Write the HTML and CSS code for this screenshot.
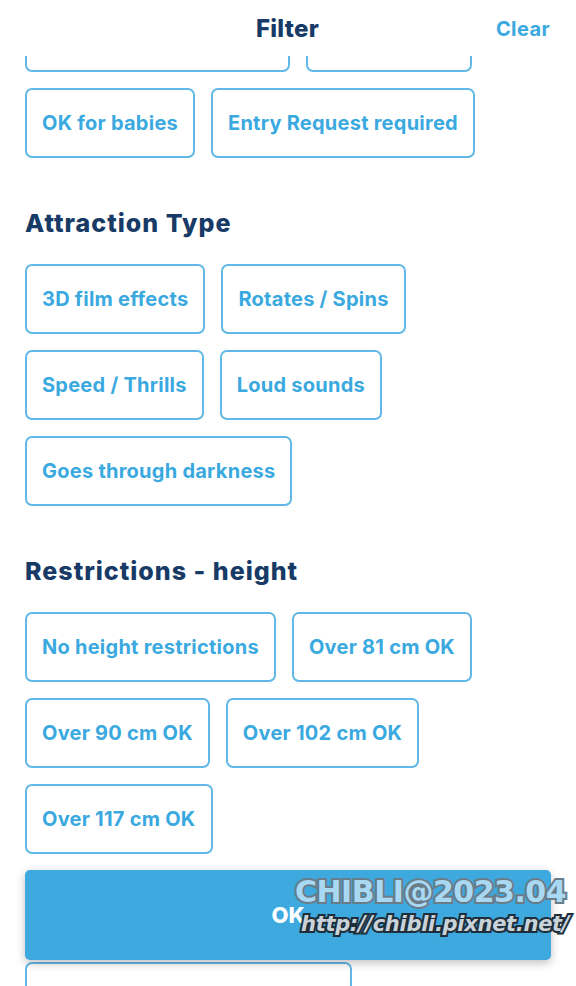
FILE: index.html
```html
<!DOCTYPE html>
<html lang="en">
<head>
  <meta charset="UTF-8">
  <meta name="viewport" content="width=device-width, initial-scale=1.0">
  <title>Filter</title>
  <link rel="stylesheet" href="styles.css">
</head>
<body>
  <div class="screen">
    <div class="header">
      <span></span>
      <h1 class="title">Filter</h1>
      <button class="clear">Clear</button>
    </div>

    <div class="scroll">
      <div class="content">
        <div class="chips first">
          <button class="chip wide-a"></button>
          <button class="chip wide-b"></button>
        </div>
        <div class="chips">
          <button class="chip">OK for babies</button>
          <button class="chip">Entry Request required</button>
        </div>

        <h2 class="section-title">Attraction Type</h2>
        <div class="chips">
          <button class="chip">3D film effects</button>
          <button class="chip">Rotates / Spins</button>
          <button class="chip">Speed / Thrills</button>
          <button class="chip">Loud sounds</button>
          <button class="chip">Goes through darkness</button>
        </div>

        <h2 class="section-title">Restrictions - height</h2>
        <div class="chips">
          <button class="chip">No height restrictions</button>
          <button class="chip">Over 81 cm OK</button>
          <button class="chip">Over 90 cm OK</button>
          <button class="chip">Over 102 cm OK</button>
          <button class="chip">Over 117 cm OK</button>
        </div>
      </div>

      <div class="footer">
        <button class="ok">OK</button>
        <button class="chip more"></button>
      </div>
    </div>

    <div class="watermark">
      <span class="wm-top">CHIBLI@2023.04</span>
      <span class="wm-url">http://chibli.pixnet.net/</span>
    </div>
  </div>
</body>
</html>
```

FILE: styles.css
```css
* {
  box-sizing: border-box;
}
body {
  margin: 0;
  background: #fff;
  font-family: Inter, 'Noto Sans', sans-serif;
}
.screen {
  position: relative;
  width: 576px;
  height: 986px;
  overflow: hidden;
  display: flex;
  flex-direction: column;
}
.header {
  height: 56px;
  display: grid;
  grid-template-columns: 1fr auto 1fr;
  align-items: center;
  padding: 0 26px 0 25px;
  background: #fff;
  position: relative;
  z-index: 2;
}
.title {
  margin: 0;
  font-size: 24px;
  font-weight: 800;
  color: #173a66;
  letter-spacing: 0.3px;
}
.clear {
  justify-self: end;
  border: none;
  background: none;
  padding: 0;
  margin-top: 2px;
  font-family: inherit;
  font-size: 20px;
  font-weight: 700;
  color: #3aa9e0;
  letter-spacing: 0.4px;
}
.scroll {
  position: relative;
  flex: 1;
  overflow: hidden;
}
.content {
  margin-top: -54px;
  padding: 0 25px;
}
.chips {
  display: flex;
  flex-wrap: wrap;
  gap: 16px;
}
.chips + .chips {
  margin-top: 16px;
}
.chip {
  height: 70px;
  display: inline-flex;
  align-items: center;
  padding: 0 15px;
  border: 2px solid #62b8e6;
  border-radius: 7px;
  background: #fff;
  font-family: inherit;
  font-size: 20px;
  font-weight: 700;
  letter-spacing: 0.25px;
  color: #3aa9e0;
  white-space: nowrap;
}
.wide-a {
  width: 265px;
}
.wide-b {
  width: 166px;
}
.section-title {
  margin: 50px 0 26px;
  height: 30px;
  line-height: 30px;
  font-size: 25px;
  font-weight: 800;
  color: #173a66;
  letter-spacing: 1px;
}
.footer {
  position: absolute;
  left: 25px;
  right: 25px;
  top: 814px;
  display: flex;
  flex-direction: column;
  align-items: flex-start;
  gap: 2px;
}
.ok {
  width: 100%;
  height: 90px;
  border: none;
  border-radius: 5px;
  background: #3ea9df;
  box-shadow: 0 3px 10px rgba(0, 0, 0, 0.25);
  font-family: inherit;
  font-size: 22px;
  font-weight: 800;
  color: #fff;
  position: relative;
  z-index: 1;
}
.more {
  width: 327px;
}
.watermark {
  position: absolute;
  left: 295px;
  top: 874px;
  z-index: 3;
  display: flex;
  flex-direction: column;
  width: 280px;
  font-family: 'DejaVu Sans', sans-serif;
  font-weight: 700;
}
.wm-top {
  font-size: 30px;
  line-height: 36px;
  letter-spacing: -0.5px;
  color: #a9d8f2;
  -webkit-text-stroke: 4px #6a7c88;
  paint-order: stroke fill;
}
.wm-url {
  margin-left: 6px;
  font-size: 21px;
  line-height: 28px;
  font-style: italic;
  letter-spacing: -0.3px;
  color: #c9d3da;
  -webkit-text-stroke: 4px #1e2e3a;
  paint-order: stroke fill;
}
```
